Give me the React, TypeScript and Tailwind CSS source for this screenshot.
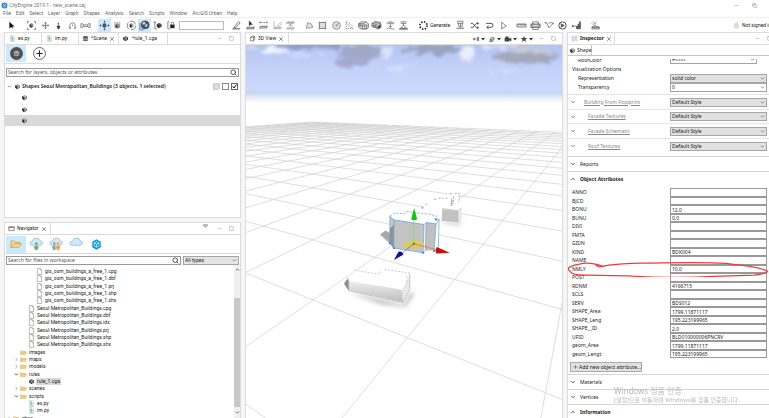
import React from 'react';
import { ChevronDown, ChevronUp, ChevronRight, Search, X, Plus, Minus, Square, Copy } from 'lucide-react';

// Icons are drawn on a 36x36 grid
const ICONS: Record<string, React.ReactNode> = {
  cursor: <path d="M11 6v22l6-5 3 5 3-1-3-6h8z" fill="#111" stroke="none" />,
  frame: (
    <>
      <path d="M10 5H5v6M26 5h5v6M10 31H5v-6M26 31h5v-6" />
      <path d="M12 14l6-4 6 4v8l-6 4-6-4z" fill="#888" stroke="none" />
      <path d="M12 14l6 3v9l-6-4z" fill="#333" stroke="none" />
    </>
  ),
  move: <path d="M18 8v20M8 18h20M15 11l3-4 3 4M15 25l3 4 3-4M11 15l-4 3 4 3M25 15l4 3-4 3" />,
  vertical: <path d="M18 8v12M13 20h10l-3 9h-4zM15 12h6" fill="#333" />,
  rotate: <path d="M13 27H8v-3h3a9 9 0 1 1 14 0h3v3h-5M18 15v5" />,
  scale: <path d="M3 12v13h5l3-4h14l3 4h5V12h-5l-3 4H11l-3-4zM10 16v5M26 16v5" />,
  pan: (
    <>
      <path d="M13 14l5-3 5 3v8l-5 3-5-3z" fill="#555" />
      <path d="M2 18l5-4v8zM34 18l-5-4v8zM18 2l-3 5h6zM18 34l-3-5h6z" fill="#222" stroke="none" />
    </>
  ),
  zoomBox: (
    <>
      <rect x="8" y="7" width="18" height="18" fill="#ddd" stroke="#bbb" />
      <path d="M12 15l6-3 6 3v9l-6 3-6-3z" fill="#999" stroke="#777" />
      <path d="M12 15l6 3v9l-6-3z" fill="#444" stroke="none" />
    </>
  ),
  orbit: (
    <>
      <circle cx="18" cy="18" r="14" strokeDasharray="24 5" />
      <path d="M12 14l6-4 6 4v8l-6 4-6-4z" fill="#999" stroke="none" />
      <path d="M12 14l6 3v9l-6-4z" fill="#222" stroke="none" />
    </>
  ),
  globe: (
    <>
      <circle cx="20" cy="16" r="13" fill="#44525b" />
      <path d="M12 8q7-3 9 2t-5 5-5-1zM21 15q5-3 7 0t-4 8q-5 0-4-3z" fill="#cfe0ea" stroke="none" />
      <path d="M3 9v23h12" />
    </>
  ),
  local: (
    <>
      <path d="M6 6v23h8M3 9l3-4 3 4" />
      <path d="M14 14l6-3 7 3v8l-7 3-6-3z" fill="#555" />
      <path d="M14 14l6 3v8l-6-3z" fill="#111" />
    </>
  ),
  lock: (
    <>
      <path d="M6 6h5M6 6v23h6" />
      <rect x="14" y="16" width="13" height="10" fill="#222" />
      <path d="M17 15v-4a4 4 0 0 1 8 0v4" />
    </>
  ),
  pencil: (
    <>
      <path d="M10 23L25 5l5 4-13 15-8 2z" fill="#eee" />
      <path d="M7 26h24l-3 5H3z" stroke="none" fill="#888" />
    </>
  ),
  street: (
    <>
      <path d="M14 3v16l4-4h6z" fill="#111" />
      <path d="M7 22h26l-4 8H3z" fill="#777" stroke="none" />
      <path d="M8 26h20" stroke="#ddd" />
    </>
  ),
  road: (
    <>
      <path d="M4 8h28M6 5v6M30 5v6" strokeDasharray="5 2" />
      <path d="M7 19h26l-4 9H3z" fill="#888" stroke="none" />
      <path d="M8 24h20" stroke="#fff" strokeDasharray="4 3" />
    </>
  ),
  slope: (
    <>
      <path d="M7 4v21M12 25L28 8l3 3-10 13" stroke="#999" />
      <path d="M7 22h26l-4 8H3z" fill="#bbb" stroke="none" />
    </>
  ),
  align: (
    <>
      <path d="M7 5h26l-4 7H3z" fill="#aaa" stroke="none" />
      <path d="M18 13v9M10 20l8-6 8 6" stroke="#888" />
      <path d="M7 24h26l-4 7H3z" fill="#bbb" stroke="none" />
    </>
  ),
  polygon: <path d="M7 27l5-19 11 4 7 11-10 3z" fill="#ddd" stroke="#777" />,
  rect: <path d="M8 8h20v20H8zM5 8h26M5 28h26M8 5v26M28 5v26" fill="#ddd" stroke="#777" />,
  circle: (
    <>
      <circle cx="18" cy="18" r="13" fill="#ddd" stroke="#777" />
      <path d="M18 18l8-8M15 18h6M18 15v6" stroke="#777" />
    </>
  ),
  measure: <path d="M7 5v23h23M7 9l19 17M12 5l18 17" strokeDasharray="4 3" />,
  texture: (
    <>
      <path d="M2 12l8-6h16l8 6v13l-7 5H12l-10-6z" fill="#eee" />
      <path d="M12 15h18v14H12z" fill="#555" stroke="none" />
      <path d="M12 20h18M12 25h18M18 15v14M24 15v14" stroke="#eee" />
      <path d="M2 12h18l6-6M2 17h9M7 12v12" />
    </>
  ),
  texture2: (
    <>
      <path d="M3 11l8-5h14l7 5v12l-10 5-19-6z" fill="#eee" />
      <path d="M3 11l17 3v14M3 17l17 4M9 13v11M14 14v11M11 6l15 6M32 5L20 28" />
      <path d="M24 22l8-7v9l-7 5z" fill="#444" />
    </>
  ),
  terrain: (
    <>
      <path d="M5 11q12-10 26 0M9 13q9-7 18 0" />
      <path d="M18 11v12M13 19l5 5 5-5M5 30q6-6 12-3t14 3" />
    </>
  ),
  terrain2: (
    <>
      <path d="M8 6h20M9 11h18M18 11v8M13 22l5-6 5 6" />
      <path d="M4 30l8-6 6 4 6-4 8 6z" fill="#999" />
    </>
  ),
  generate: <circle cx="18" cy="18" r="12" strokeWidth="5" strokeDasharray="5 4.4" stroke="#222" />,
  update: (
    <>
      <path d="M9 4h17v7H9zM12 11v10M24 11v10M18 11v12M13 19l5 5 5-5" />
      <path d="M5 27h25" strokeWidth="4" stroke="#888" />
    </>
  ),
  shuffle: <path d="M6 11h6l12 14h7M6 25h6l12-14h7M27 7l4 4-4 4M27 21l4 4-4 4" strokeWidth="3" />,
  loop: <path d="M7 11h16a6 6 0 0 1 0 13H10M15 19l-6 5 6 5" strokeWidth="3" />,
  play: <path d="M12 7v22l15-9z" />,
  ruler: <path d="M3 13h30v10H3zM9 13v5M14 13v5M19 13v5M24 13v5M29 13v5" fill="#eee" />,
  print: (
    <>
      <path d="M9 13V6h18v7M9 24v7h18v-7" fill="#fff" />
      <rect x="3" y="13" width="30" height="11" fill="#aaa" />
      <path d="M10 18h16" stroke="#fff" />
    </>
  ),
  viewshed: <path d="M4 9h5l7 17L30 11q-7-6-15 0M4 6v6M30 8v6" />,
  compass: (
    <>
      <circle cx="18" cy="18" r="12" strokeWidth="3" />
      <path d="M12 12l12 6-12 6 3-6z" fill="#444" />
    </>
  ),
  corridor: (
    <>
      <path d="M3 20l4-3v6zM8 20h9" fill="#222" />
      <path d="M18 20h4v9h-4zM23 13h3v16h-3zM28 6h3v23h-3z" fill="#666" />
    </>
  ),
  weather: (
    <>
      <path d="M10 16a6 6 0 0 1 10-2M12 5v4M4 9l3 3M20 7l-2 3" />
      <path d="M6 26q0-7 7-6 5-4 9 1 8-1 10 5H6z" fill="#bbb" />
      <path d="M4 29h28" />
    </>
  ),
  person: (
    <>
      <path d="M13 14V9a5 5 0 0 1 10 0v5M18 20v5" stroke="#777" />
      <path d="M9 15h18v15H9z" stroke="#777" />
    </>
  ),
  cube: (
    <>
      <path d="M6 11l13-6 11 6v14l-13 7-11-7z" fill="#aaa" stroke="none" />
      <path d="M6 11l10 5v16l-10-7z" fill="#333" stroke="none" />
      <path d="M16 16l14-5v14l-13 7z" fill="#777" stroke="none" />
      <path d="M23 14v14M16 16l14-5" stroke="#ddd" />
    </>
  ),
  cga: (
    <>
      <path d="M6 13l13-7 12 5v13l-14 7-11-6z" fill="#333" stroke="none" />
      <path d="M12 15h9l6-3M14 25l9-12M20 24l7-4" stroke="#eee" strokeWidth="3" />
    </>
  ),
  layers: (
    <>
      <path d="M6 9q12-5 24 0v4q-12 5-24 0z" fill="#333" />
      <path d="M6 17q12 5 24 0v4q-12 5-24 0zM6 25q12 5 24 0v3q-12 5-24 0z" fill="#777" />
    </>
  ),
  file: <path d="M7 3h15l7 7v23H7zM22 3v7h7" fill="#fff" stroke="#888" strokeWidth="3" />,
  py: (
    <>
      <path d="M7 3h15l7 7v23H7z" fill="#fff" stroke="#999" />
      <path d="M12 11h8M12 16h11M12 26h11" stroke="#3c9d6d" strokeWidth="4" />
      <path d="M12 20h10" stroke="#4b9f84" strokeWidth="3" />
    </>
  ),
  folder: (
    <>
      <path d="M3 28V9h10l3 4h13v6" fill="#f8e0a0" stroke="#c6953d" />
      <path d="M3 28l7-11h24l-7 11z" fill="#fbd98a" stroke="#c6953d" />
    </>
  ),
  box3d: <path d="M8 12h15v18H8zM8 12l6-6h15v18l-6 6M23 12l6-6" strokeWidth="3" />,
  nav: <path d="M4 9h28v20H4zM4 14h28M16 9v5" strokeWidth="3" />,
  inspector: <path d="M5 6h10v8H5zM20 6h11v8H20zM5 21h10v9H5zM20 21h11v9H20zM10 14v7M25 14v7" stroke="#777" strokeDasharray="5 2" />,
  viewDir: <path d="M4 18l8-5v10zM13 18h8M24 9v18M24 11h6v14h-6" fill="#777" />,
  viewShade: <path d="M9 19l8-9 11 2-3 12-9 7-9-1zM9 19l10 2 9-9M19 21l-3 10" fill="#aaa" />,
  camera: <path d="M4 13h19v15H4zM23 18l9-5v14l-9-4zM8 8h11v5H8z" fill="#444" />,
  star: <path d="M18 4l4 10h11l-9 7 4 11-10-7-10 7 4-11-9-7h11z" fill="#444" stroke="none" />,
  hatch: <path d="M4 4h28v28H4zM4 14L14 4M4 24L24 4M6 32L32 6M16 32l16-16" stroke="#666" />,
  logo: (
    <>
      <circle cx="18" cy="18" r="15" fill="#1680c8" stroke="none" />
      <path d="M11 13l7-5 8 5v9l-8 5-7-5zM11 13l7 4 8-4M18 17v10" stroke="#fff" />
    </>
  ),
};

const Icon = ({ name, className = 'size-3' }: { name: string; className?: string }) => (
  <svg viewBox="0 0 36 36" className={`${className} shrink-0`} fill="none" stroke="#444" strokeWidth="2" aria-hidden="true">
    {ICONS[name]}
  </svg>
);

const MENUS = ['File', 'Edit', 'Select', 'Layer', 'Graph', 'Shapes', 'Analysis', 'Search', 'Scripts', 'Window', 'ArcGIS Urban', 'Help'];

const ToolGroup = ({ names, active = [], className }: { names: string[]; active?: string[]; className: string }) => (
  <div className={`flex shrink-0 justify-between ${className}`}>
    {names.map((n) => (
      <button key={n} aria-label={n} className={`flex h-[13px] w-[13px] items-center justify-center ${active.includes(n) ? 'bg-[#cce8ff]' : ''}`}>
        <Icon name={n} className="size-[11px]" />
      </button>
    ))}
  </div>
);

const WindowButtons = () => (
  <div className="ml-auto flex items-center gap-[7px] pr-[6px] text-[#888]">
    <button aria-label="Minimize"><Minus size={5} /></button>
    <button aria-label="Maximize"><Square size={5} /></button>
  </div>
);

const SelectBox = ({ id, label, value, className = '' }: { id?: string; label?: string; value: string; className?: string }) => (
  <div className={`relative ${className}`}>
    <select id={id} aria-label={label} className="block h-full w-full appearance-none border border-[#a5a5a5] bg-inherit pl-px leading-[7px]">
      <option>{value}</option>
    </select>
    <ChevronDown size={5} strokeWidth={3} className="pointer-events-none absolute top-[2px] right-[2px] text-[#555]" />
  </div>
);

const SearchBox = ({ placeholder, className }: { placeholder: string; className: string }) => (
  <div className={`flex items-center border border-[#999] bg-white pr-px ${className}`}>
    <input aria-label={placeholder} placeholder={placeholder} className="h-[7px] w-0 flex-1 pl-px font-['Noto_Sans',sans-serif] leading-[7px] placeholder:text-[#555]" />
    <Search size={7} strokeWidth={3} className="text-[#444]" />
  </div>
);

const ScenePanel = () => (
  <section className="flex h-[186px] shrink-0 flex-col border border-[#dcdcdc] bg-white">
    <div className="flex h-3 items-stretch border-b border-[#dcdcdc]">
      <button className="flex w-[37px] items-center gap-[2px] border-r border-[#dcdcdc] pl-1"><Icon name="py" className="size-[7px]" />ex.py</button>
      <button className="flex w-[37px] items-center gap-[2px] border-r border-[#dcdcdc] pl-1"><Icon name="py" className="size-[7px]" />im.py</button>
      <button className="flex w-[40px] items-center gap-[2px] border-r border-[#dcdcdc] pl-[3px]"><Icon name="layers" className="size-[7px]" />*Scene<X size={6} /></button>
      <button className="flex w-[49px] items-center gap-[3px] border-r border-[#dcdcdc] pl-[3px]"><Icon name="cga" className="size-[7px]" />*rule_1.cga</button>
      <WindowButtons />
    </div>
    <div className="flex h-[19px] items-start border-b border-[#dcdcdc] pl-px">
      <button aria-label="Layers" className="flex h-[17px] w-5 items-center justify-center bg-[#cce8ff]">
        <span className="flex size-[13px] items-center justify-center rounded-full bg-[#505050]">
          <svg viewBox="0 0 24 24" className="size-[7px]" fill="#ddd" stroke="#505050" strokeWidth="2">
            <path d="M2 5q10-5 20 0v14q-10 5-20 0zM2 9q10 4 20 0M2 15q10 4 20 0" />
          </svg>
        </span>
      </button>
      <button aria-label="Add layer" className="ml-[3px] flex h-[17px] w-5 items-center justify-center">
        <span className="flex size-[13px] items-center justify-center rounded-full border border-[#666]">
          <Plus size={9} strokeWidth={3} />
        </span>
      </button>
    </div>
    <SearchBox placeholder="Search for layers, objects or attributes" className="mx-px mt-1 h-[9px]" />
    <div className="mt-1 flex h-[11px] items-center pr-[2px] pl-[2px]">
      <ChevronDown size={5} strokeWidth={3} className="text-[#444]" />
      <Icon name="cube" className="mr-px ml-[2px] size-[7px]" />
      <span className="font-['Noto_Sans',sans-serif] font-semibold whitespace-nowrap">Shapes Seoul Metropolitan_Buildings (3 objects, 1 selected)</span>
      <div className="ml-auto flex items-center gap-[2px]">
        <Icon name="hatch" className="size-[7px]" />
        <input type="checkbox" aria-label="Lock layer" className="size-[7px] appearance-none border border-[#888]" />
        <span className="relative flex">
          <input type="checkbox" aria-label="Show layer" defaultChecked className="size-[7px] appearance-none border border-[#666]" />
          <svg viewBox="0 0 14 14" className="pointer-events-none absolute inset-0 size-[7px]" fill="none" stroke="#111" strokeWidth="2"><path d="M3 7l3 3 5-7" /></svg>
        </span>
      </div>
    </div>
    <ul>
      {[0, 1, 2].map((i) => (
        <li key={i} className={`flex h-[11px] items-center pl-4 nth-2:h-3 ${i === 2 ? 'bg-[#d9d9d9]' : ''}`}>
          <Icon name="cube" className="size-[7px]" />
        </li>
      ))}
    </ul>
  </section>
);

type TreeRow = { name: string; icon: string; level: number; open?: boolean; closed?: boolean; selected?: boolean };

const TREE: TreeRow[] = [
  ...['cpg', 'dbf', 'prj', 'shp', 'shx'].map((ext) => ({ name: `gis_osm_buildings_a_free_1.${ext}`, icon: 'file', level: 4 })),
  ...['cpg', 'dbf', 'idx', 'prj', 'shp', 'shx'].map((ext) => ({ name: `Seoul Metropolitan_Buildings.${ext}`, icon: 'file', level: 3 })),
  { name: 'images', icon: 'folder', level: 2 },
  { name: 'maps', icon: 'folder', level: 2, closed: true },
  { name: 'models', icon: 'folder', level: 2, closed: true },
  { name: 'rules', icon: 'folder', level: 2, open: true },
  { name: 'rule_1.cga', icon: 'cga', level: 3, selected: true },
  { name: 'scenes', icon: 'folder', level: 2, closed: true },
  { name: 'scripts', icon: 'folder', level: 2, open: true },
  { name: 'ex.py', icon: 'py', level: 3 },
  { name: 'im.py', icon: 'py', level: 3 },
  { name: 'shoe', icon: 'folder', level: 1, closed: true },
];

const INDENT: Record<number, string> = { 1: 'pl-[2px]', 2: 'pl-[9px]', 3: 'pl-[17px]', 4: 'pl-[25px]' };

const Cloud = ({ people = [] }: { people?: string[] }) => (
  <svg viewBox="0 0 42 42" className="size-[14px]" strokeWidth="2">
    <path d="M8 25q-7-2-5-8 2-5 7-4 3-10 12-10t12 9q7 1 6 7-1 6-7 6z" fill="#cfe9f8" stroke="#7fb4d2" />
    {people.map((c, i) => (
      <g key={c} transform={`translate(${i * 11 + (people.length > 1 ? 16 : 22)} 20)`} fill={c} stroke="#fff" strokeWidth="1">
        <circle cx="0" cy="0" r="5" />
        <path d="M-7 8q7-6 14 0v7h-3v5h-8v-5h-3z" />
      </g>
    ))}
  </svg>
);

const NavigatorPanel = () => (
  <section className="flex min-h-0 flex-1 flex-col border border-b-0 border-[#dcdcdc] bg-white">
    <div className="flex h-3 shrink-0 items-stretch border-b border-[#dcdcdc]">
      <button className="flex w-[46px] items-center gap-[2px] border-r border-[#dcdcdc] pl-[3px]"><Icon name="nav" className="size-[7px]" />Navigator<X size={6} /></button>
      <div className="ml-auto flex items-center">
        <svg viewBox="0 0 12 12" className="mr-[9px] mb-1 size-[5px]" fill="none" stroke="#777" strokeWidth="2"><path d="M1 2h10L6 8z" /></svg>
        <WindowButtons />
      </div>
    </div>
    <div className="flex h-[19px] shrink-0 items-center border-b border-[#dcdcdc] pl-px">
      <button aria-label="Workspace" className="flex h-[17px] w-5 items-center justify-center bg-[#cce8ff]"><Icon name="folder" /></button>
      <button aria-label="My content" className="flex w-5 justify-center"><Cloud people={['#68ab7c']} /></button>
      <button aria-label="My groups" className="flex w-5 justify-center"><Cloud people={['#7ba6b4', '#eda04e']} /></button>
      <button aria-label="My organization" className="flex w-5 justify-center"><Cloud /></button>
      <button aria-label="ArcGIS Urban" className="flex w-5 justify-center">
        <svg viewBox="0 0 36 36" className="size-[11px]" fill="#0c9adb">
          <path d="M18 1l14 8v18l-14 8-14-8V9z" />
          <path d="M10 13l8-5 8 5v9l-8 5-8-5zM10 13l8 4 8-4M18 17v10" fill="none" stroke="#fff" strokeWidth="2" />
        </svg>
      </button>
    </div>
    <div className="mx-px mt-[2px] flex h-[9px] shrink-0 gap-[2px]">
      <SearchBox placeholder="Search for files in workspace" className="w-[175px]" />
      <SelectBox label="File type" value="All types" className="flex-1 bg-[#e4e4e4]" />
    </div>
    <div className="flex min-h-0 flex-1">
      <ul className="min-w-0 flex-1 overflow-hidden pt-[3px]">
        {TREE.map((row) => (
          <li key={row.name} className={`flex h-[7px] items-center nth-[3n]:h-2 ${INDENT[row.level]}`}>
            <span className="mr-px flex w-[5px] justify-center">
              {row.closed && <ChevronRight size={5} strokeWidth={3} className="text-[#777]" />}
              {row.open && <ChevronDown size={5} strokeWidth={4} className="text-[#333]" />}
            </span>
            <Icon name={row.icon} className="mr-px size-[7px]" />
            <span className={`leading-[7px] ${row.selected ? 'bg-[#d9d9d9] px-px' : 'px-px'}`}>{row.name}</span>
          </li>
        ))}
      </ul>
      <div className="flex w-[6px] flex-col items-center bg-[#f0f0f0] pt-[2px]">
        <ChevronUp size={5} strokeWidth={4} className="shrink-0 text-[#555]" />
        <div className="mt-[26px] w-full flex-1 bg-[#c8c8c8]" />
        <ChevronDown size={5} strokeWidth={4} className="my-[3px] shrink-0 text-[#555]" />
      </div>
    </div>
  </section>
);

// Ground grid: each family of lines meets in its own vanishing point on the horizon
const HORIZON = 212;
const VP_A = -1290;
const VP_B = 1067;
const slopeA = (k: number) => 1 / (1.42 + 1.084 * k);
const stepB = (k: number) => -(0.186 + 0.6285 * k);
const cross = (a: number, b: number) => {
  const s = slopeA(a);
  const t = stepB(b);
  const u = (s * (VP_B - VP_A)) / (1 - s * t);
  return [VP_B + t * u, HORIZON + u];
};
const FAR_A = 21;
const FAR_B = 22;
const GRID_LINES: number[][] = [];
for (let k = 0; k <= FAR_A; k++) {
  const [x, y] = cross(k, FAR_B);
  GRID_LINES.push([x, y, 1000, HORIZON + slopeA(k) * (1000 - VP_A)]);
}
for (let k = 0; k <= FAR_B; k++) {
  const [x, y] = cross(FAR_A, k);
  GRID_LINES.push([x, y, VP_B + stepB(k) * 1000, HORIZON + 1000]);
}

const Scene = () => (
  <svg viewBox="0 42 957 1122" preserveAspectRatio="xMidYMin slice" className="absolute inset-0 h-full w-full" role="img" aria-label="3D scene with three buildings">
    <defs>
      <linearGradient id="sky" x1="0" y1="0" x2="0" y2="1">
        <stop offset="0" stopColor="#b4c3f1" />
        <stop offset="0.35" stopColor="#c3d0f9" />
        <stop offset="0.76" stopColor="#ccd9fc" />
        <stop offset="0.82" stopColor="#c6d5ef" />
        <stop offset="0.9" stopColor="#e4ecf8" />
        <stop offset="1" stopColor="#ffffff" />
      </linearGradient>
      <linearGradient id="wall" x1="0" y1="0" x2="0" y2="1">
        <stop offset="0" stopColor="#eeeeee" />
        <stop offset="1" stopColor="#bdbdbd" />
      </linearGradient>
      <filter id="soft" x="-5%" y="-50%" width="110%" height="200%" colorInterpolationFilters="sRGB">
        <feTurbulence type="fractalNoise" baseFrequency="0.03 0.07" numOctaves="3" seed="4" result="n" />
        <feDisplacementMap in="SourceGraphic" in2="n" scale="36" xChannelSelector="R" yChannelSelector="G" />
        <feGaussianBlur stdDeviation="5" />
      </filter>
      <filter id="shade" x="-20%" y="-50%" width="140%" height="200%"><feGaussianBlur stdDeviation="6" /></filter>
    </defs>
    <rect x="0" y="42" width="957" height="1122" fill="#fff" />
    <rect x="-10" y="42" width="980" height="175" fill="url(#sky)" />
    <g filter="url(#soft)">
      <ellipse cx="85" cy="60" rx="40" ry="10" fill="#ecf2ff" />
      <ellipse cx="20" cy="54" rx="30" ry="6" fill="#d5dffb" />
      <ellipse cx="190" cy="72" rx="60" ry="5" fill="#cfdafc" />
      <ellipse cx="190" cy="44" rx="100" ry="11" fill="#939fc9" />
      <ellipse cx="350" cy="64" rx="62" ry="26" fill="#a0a8c8" />
      <ellipse cx="325" cy="94" rx="54" ry="16" fill="#a3aace" />
      <ellipse cx="425" cy="64" rx="20" ry="14" fill="#dbe3fa" />
      <ellipse cx="455" cy="112" rx="36" ry="4" fill="#d7e1ff" />
      <ellipse cx="560" cy="54" rx="92" ry="16" fill="#9aa3c0" />
      <ellipse cx="670" cy="66" rx="24" ry="18" fill="#e8efff" />
      <ellipse cx="770" cy="48" rx="60" ry="7" fill="#dbe4fc" />
      <ellipse cx="845" cy="78" rx="98" ry="18" fill="#a3a9bc" />
      <ellipse cx="860" cy="56" rx="60" ry="9" fill="#c4cad9" />
      <ellipse cx="780" cy="120" rx="50" ry="4" fill="#d7e1ff" />
    </g>
    <g stroke="#cdcdcd" strokeWidth="2">
      {GRID_LINES.map(([x1, y1, x2, y2], i) => (
        <line key={i} x1={x1} y1={y1} x2={x2} y2={y2} />
      ))}
    </g>
    <g transform="translate(255 450)">
      <g>
        <path d="M275 85l35-25 35-10 20-12 28 0v38l3 45-56-1-65-30z" fill="#fff" />
        <path d="M338 120l48 6 12-10-3 14-12 5-44-8z" fill="#ccc" filter="url(#shade)" />
        <path d="M340 84l47 6-1 34-48-5z" fill="url(#wall)" stroke="#888" />
        <path d="M340 86l46 5v30l-46-5z" fill="#c2c2c2" />
        <path d="M387 90l8-8-1 36-8 6z" fill="#eee" stroke="#aaa" />
        <path d="M275 82h9M280 78v8M288 73l8-5M314 56h6M328 53h14M350 50l4 6M362 40l8-2M366 54v20M372 48v22M376 38h14v14l-3 14" fill="none" stroke="#aaa" strokeWidth="3" strokeDasharray="6 4" />
        <path d="M367 58v18" stroke="#aaa" strokeWidth="4" />
      </g>
      <path d="M55 335l168 38 22-40 8 10-25 36-75-8z" fill="#bbb" filter="url(#shade)" />
      <path d="M57 292l17-20 76 8 10-12 80 10-20 90-163-38z" fill="#fff" />
      <path d="M57 302l163 26v38L57 330z" fill="url(#wall)" />
      <path d="M220 325l22-45-1 45-21 42z" fill="#e9e9e9" />
      <path d="M43 310l9-14 5 5v30z" fill="#8d8d8d" />
      <path d="M52 293l5 2v36l163 36M220 367l21-40v-48" fill="none" stroke="#999" strokeWidth="2" strokeDasharray="5 2" />
      <path d="M74 270l76 11 4-12M166 267l74 11M232 288v22" fill="none" stroke="#aaa" strokeWidth="2" strokeDasharray="5 5" />
      <path d="M151 162l17-12 14 8v32z" fill="#a9a9a9" />
      <path d="M181 107l16-10 25 3 10-7 68 8 22 6-6 8 13 2-9 13-30-4-6 6-91-14z" fill="#fff" />
      <path d="M181 107l12 10v86l-12-15z" fill="#c9c9c9" />
      <path d="M181 145l12-14v72l-12-15z" fill="#929292" />
      <path d="M193 118l91 14-3 85-88-14z" fill="#c3c3c3" />
      <path d="M284 132l6-6-2 84-7 7z" fill="#fff" />
      <path d="M290 126l30 4-6 80-26 0z" fill="#c0c0c0" />
      <path d="M320 130l9-13-2 83-13 12z" fill="#fff" />
      <g fill="none" stroke="#5b9bd8" strokeWidth="2">
        <path d="M181 107l12 11v85l-12-15zM193 118l91 14-3 85-88-14M284 132l6-6-2 84-7 7M290 126l30 4-6 82M320 130l9-13-2 83-13 12" />
        <path d="M181 107l16-10 25 3 10-7 68 8 22 6-6 8 13 2" strokeDasharray="7 4" />
      </g>
      <path d="M190 200h6v6h-6zM178 185h6v6h-6zM278 214h6v6h-6zM311 209h6v6h-6zM317 114h6v6h-6z" fill="#3f8fe0" />
      <ellipse cx="253" cy="192" rx="32" ry="13" fill="#d9cf55" opacity="0.85" />
      <path d="M253 190V117" stroke="#6fdc6f" strokeWidth="2" />
      <path d="M253 190l69 18" stroke="#e06060" strokeWidth="2" />
      <path d="M253 190l-38 30" stroke="#5a5ab4" strokeWidth="2" />
      <circle cx="253" cy="190" r="3" fill="#555" />
      <path d="M254 82l9 34q-9 6-18 0z" fill="#09c809" />
      <path d="M322 200l39 17-41 2q-4-9 2-19z" fill="#d40a0a" />
      <path d="M193 239l14-25q10-4 15 8z" fill="#0b0ba8" />
    </g>
  </svg>
);

const ViewPanel = () => (
  <section className="flex min-w-0 flex-1 flex-col border border-b-0 border-[#dcdcdc] bg-white">
    <div className="flex h-3 shrink-0 items-stretch border-b border-[#dcdcdc]">
      <button className="flex w-[43px] items-center gap-[2px] border-r border-[#dcdcdc] pl-[3px]"><Icon name="box3d" className="size-[7px]" />3D View<X size={6} /></button>
      <div className="ml-auto flex items-center gap-[3px] pr-[6px]">
        {['viewDir', 'viewShade', 'camera', 'star'].map((n) => (
          <button key={n} aria-label={n} className="flex items-center gap-px">
            <Icon name={n} className="size-2" />
            <svg viewBox="0 0 8 8" className="size-1" fill="#333"><path d="M0 2h8L4 7z" /></svg>
          </button>
        ))}
      </div>
      <div className="flex items-center"><WindowButtons /></div>
    </div>
    <div className="relative flex-1 overflow-hidden"><Scene /></div>
  </section>
);

const STYLES = [
  { name: 'Building From Footprint', indent: 'pl-[8px]' },
  { name: 'Facade Textures', indent: 'pl-3' },
  { name: 'Facade Schematic', indent: 'pl-3' },
  { name: 'Roof Textures', indent: 'pl-3' },
];

const ATTRIBUTES = [
  ['ANNO', ''], ['BJCD', ''], ['BONU', '12.0'], ['BUNU', '0.0'], ['DIVI', ''], ['FMTA', ''], ['GIDN', ''],
  ['KIND', 'BDK004'], ['NAME', ''], ['NMLY', '10.0'], ['POST', ''], ['RDNM', '4166715'], ['SCLS', ''],
  ['SERV', 'BDS012'], ['SHAPE_Area', '1799.11871117'], ['SHAPE_Leng', '195.223199965'], ['SHAPE__ID', '2.0'],
  ['UFID', 'BLD010000006PNCRV'], ['geom_Area', '1799.11871117'], ['geom_Lengt', '195.223199965'],
];

const SectionHeader = ({ title, open = false }: { title: string; open?: boolean }) => (
  <button className={`flex h-[15px] w-full shrink-0 items-center gap-1 border-t border-[#d5d5d5] pl-[2px] ${open ? 'font-bold' : ''}`}>
    {open ? <ChevronUp size={6} strokeWidth={3} /> : <ChevronDown size={6} strokeWidth={3} />}
    {title}
  </button>
);

const InspectorPanel = () => (
  <section className="relative flex w-[202px] shrink-0 flex-col overflow-hidden border border-r-0 border-b-0 border-[#dcdcdc] bg-white font-['Noto_Sans',sans-serif]">
    <div className="flex h-3 shrink-0 items-stretch border-b border-[#dcdcdc]">
      <button className="flex w-[47px] items-center gap-[2px] border-r border-[#dcdcdc] pl-[3px] font-bold"><Icon name="inspector" className="size-[7px]" />Inspector<X size={6} /></button>
      <div className="ml-auto flex items-center gap-[7px] text-[#888]">
        <button aria-label="Minimize"><Minus size={5} /></button>
        <button aria-label="Maximize" className="w-[2px] overflow-hidden"><Square size={5} /></button>
      </div>
    </div>
    <div className="flex h-[11px] shrink-0 border-b border-[#c5c5c5]">
      <button className="flex w-6 items-center gap-px border-r border-[#c5c5c5] pl-px"><Icon name="cube" className="size-[7px]" />Shape</button>
    </div>
    <div className="mt-[3px] mr-[2px] flex h-[5px] shrink-0 items-end overflow-hidden pl-[10px]">
      <label htmlFor="roofColor" className="w-[92px] leading-[7px]">RoofColor</label>
      <SelectBox id="roofColor" value="#ffffff" className="mr-[10px] h-[9px] flex-1" />
    </div>
    <div className="mt-[2px] flex h-[7px] shrink-0 items-center pl-1">Visualization Options</div>
    <div className="mt-px flex h-[9px] shrink-0 items-center pr-[2px] pl-[10px]">
      <label htmlFor="representation" className="w-[92px]">Representation</label>
      <SelectBox id="representation" value="solid color" className="h-[9px] flex-1 bg-[#e1e1e1]" />
    </div>
    <div className="mb-[2px] flex h-[9px] shrink-0 items-center pr-[2px] pl-[10px]">
      <label htmlFor="transparency" className="w-[92px]">Transparency</label>
      <SelectBox id="transparency" value="0" className="h-[9px] flex-1" />
    </div>
    <div>
      {STYLES.map((s) => (
        <div key={s.name} className="flex h-[15px] items-center border-t border-[#e5e5e5] pr-[2px] pl-[2px] nth-2:h-[14px]">
          <ChevronDown size={6} strokeWidth={3} className="text-[#555]" />
          <div className={`w-[94px] ${s.indent}`}><a href="#" className="text-[#888] underline">{s.name}</a></div>
          <SelectBox label={s.name} value="Default Style" className="h-[9px] flex-1 bg-[#e1e1e1]" />
        </div>
      ))}
    </div>
    <div className="mt-[3px]"><SectionHeader title="Reports" /></div>
    <SectionHeader title="Object Attributes" open />
    <div className="relative pt-[2px] pr-[2px] pl-1">
      {ATTRIBUTES.map(([name, value]) => (
        <div key={name} className="flex h-2 items-center odd:h-[9px]">
          <label htmlFor={name} className="w-[98px]">{name}</label>
          <input id={name} defaultValue={value} className="h-full w-0 flex-1 border border-[#999] bg-white pl-px leading-[6px]" />
        </div>
      ))}
      {/* pen mark round the NMLY row */}
      <svg viewBox="10 0 586 60" preserveAspectRatio="none" className="pointer-events-none absolute top-[73px] left-0 h-[18px] w-full" fill="none" stroke="#f03a3a" strokeWidth="4">
        <path d="M115 26q-40-18-72-9-44 10-28 23 6 14 48 14l120 2q140 10 250 2l120-4q40-6 38-14-30-16-110-24-50-6-230-2-90-2-150 12l-10-5" />
      </svg>
    </div>
    <div className="flex shrink-0 pt-1 pb-[2px] pl-[2px]">
      <button className="flex h-[10px] w-[72px] items-center gap-px border border-[#aaa] bg-[#e1e1e1] pl-[2px] whitespace-nowrap"><Plus size={6} />Add new object attribute...</button>
    </div>
    <SectionHeader title="Materials" />
    <SectionHeader title="Vertices" />
    <SectionHeader title="Information" open />
  </section>
);

const App: React.FC = () => (
  <div className="relative flex h-screen flex-col overflow-hidden bg-[#f6f6f6] font-['Roboto','Noto_Sans_CJK_KR',sans-serif] text-[5px] leading-[7px] text-[#222]">
    <header className="shrink-0 bg-white">
      <div className="flex h-[10px] items-center gap-px pl-px">
        <Icon name="logo" className="size-[7px]" />
        <span className="text-[#777]">CityEngine 2019.1 - new_scene.cej</span>
        <div className="ml-auto flex items-center gap-[13px] pr-3 text-[#777]">
          <button aria-label="Minimize window"><Minus size={5} /></button>
          <button aria-label="Restore window"><Copy size={5} /></button>
        </div>
      </div>
      <nav className="flex h-[7px] items-center gap-[5px] pl-[3px] text-[#666]">
        {MENUS.map((m) => <button key={m}>{m}</button>)}
      </nav>
    </header>
    <div className="flex h-[15px] shrink-0 items-center overflow-hidden border-t border-[#f0f0f0] bg-white pl-[5px]">
      <ToolGroup names={['cursor']} className="mr-[7px] w-[13px]" />
      <ToolGroup names={['frame', 'move', 'vertical', 'rotate', 'scale']} className="mr-[6px] w-[67px]" />
      <ToolGroup names={['pan', 'zoomBox', 'orbit', 'globe', 'local', 'lock']} active={['pan', 'globe']} className="w-[80px]" />
      <input aria-label="Coordinates" className="mr-[6px] ml-px h-[9px] w-[45px] shrink-0 border border-[#bbb]" />
      <ToolGroup names={['pencil', 'street', 'road', 'slope', 'align']} className="mr-[6px] w-[67px]" />
      <ToolGroup names={['polygon', 'rect', 'circle', 'measure', 'texture', 'texture2', 'terrain', 'terrain2']} className="mr-2 w-[107px]" />
      <button className="mr-[2px] flex w-[34px] shrink-0 items-center gap-px"><Icon name="generate" className="size-[11px]" />Generate</button>
      <ToolGroup names={['update', 'shuffle', 'loop', 'play']} className="mr-[5px] w-[56px]" />
      <ToolGroup names={['ruler', 'print', 'viewshed', 'compass', 'corridor']} className="mr-[6px] w-[68px]" />
      <ToolGroup names={['weather']} className="w-[13px]" />
      <button className="ml-auto flex w-[36px] shrink-0 items-center gap-[2px] whitespace-nowrap"><Icon name="person" className="size-[7px]" />Not signed in</button>
    </div>
    <main className="flex min-h-0 flex-1 gap-1 pl-1">
      <div className="flex w-[237px] shrink-0 flex-col gap-1">
        <ScenePanel />
        <NavigatorPanel />
      </div>
      <ViewPanel />
      <InspectorPanel />
    </main>
    <div className="pointer-events-none absolute right-[18px] bottom-[14px] w-[137px] font-['Noto_Sans','Noto_Sans_CJK_KR',sans-serif] whitespace-nowrap text-[#a8a8a8] opacity-80">
      <p className="text-[8px] leading-[10px]">Windows 정품 인증</p>
      <p className="text-[6px] leading-[8px]">[설정]으로 이동하여 Windows를 정품 인증합니다.</p>
    </div>
  </div>
);

export default App;
